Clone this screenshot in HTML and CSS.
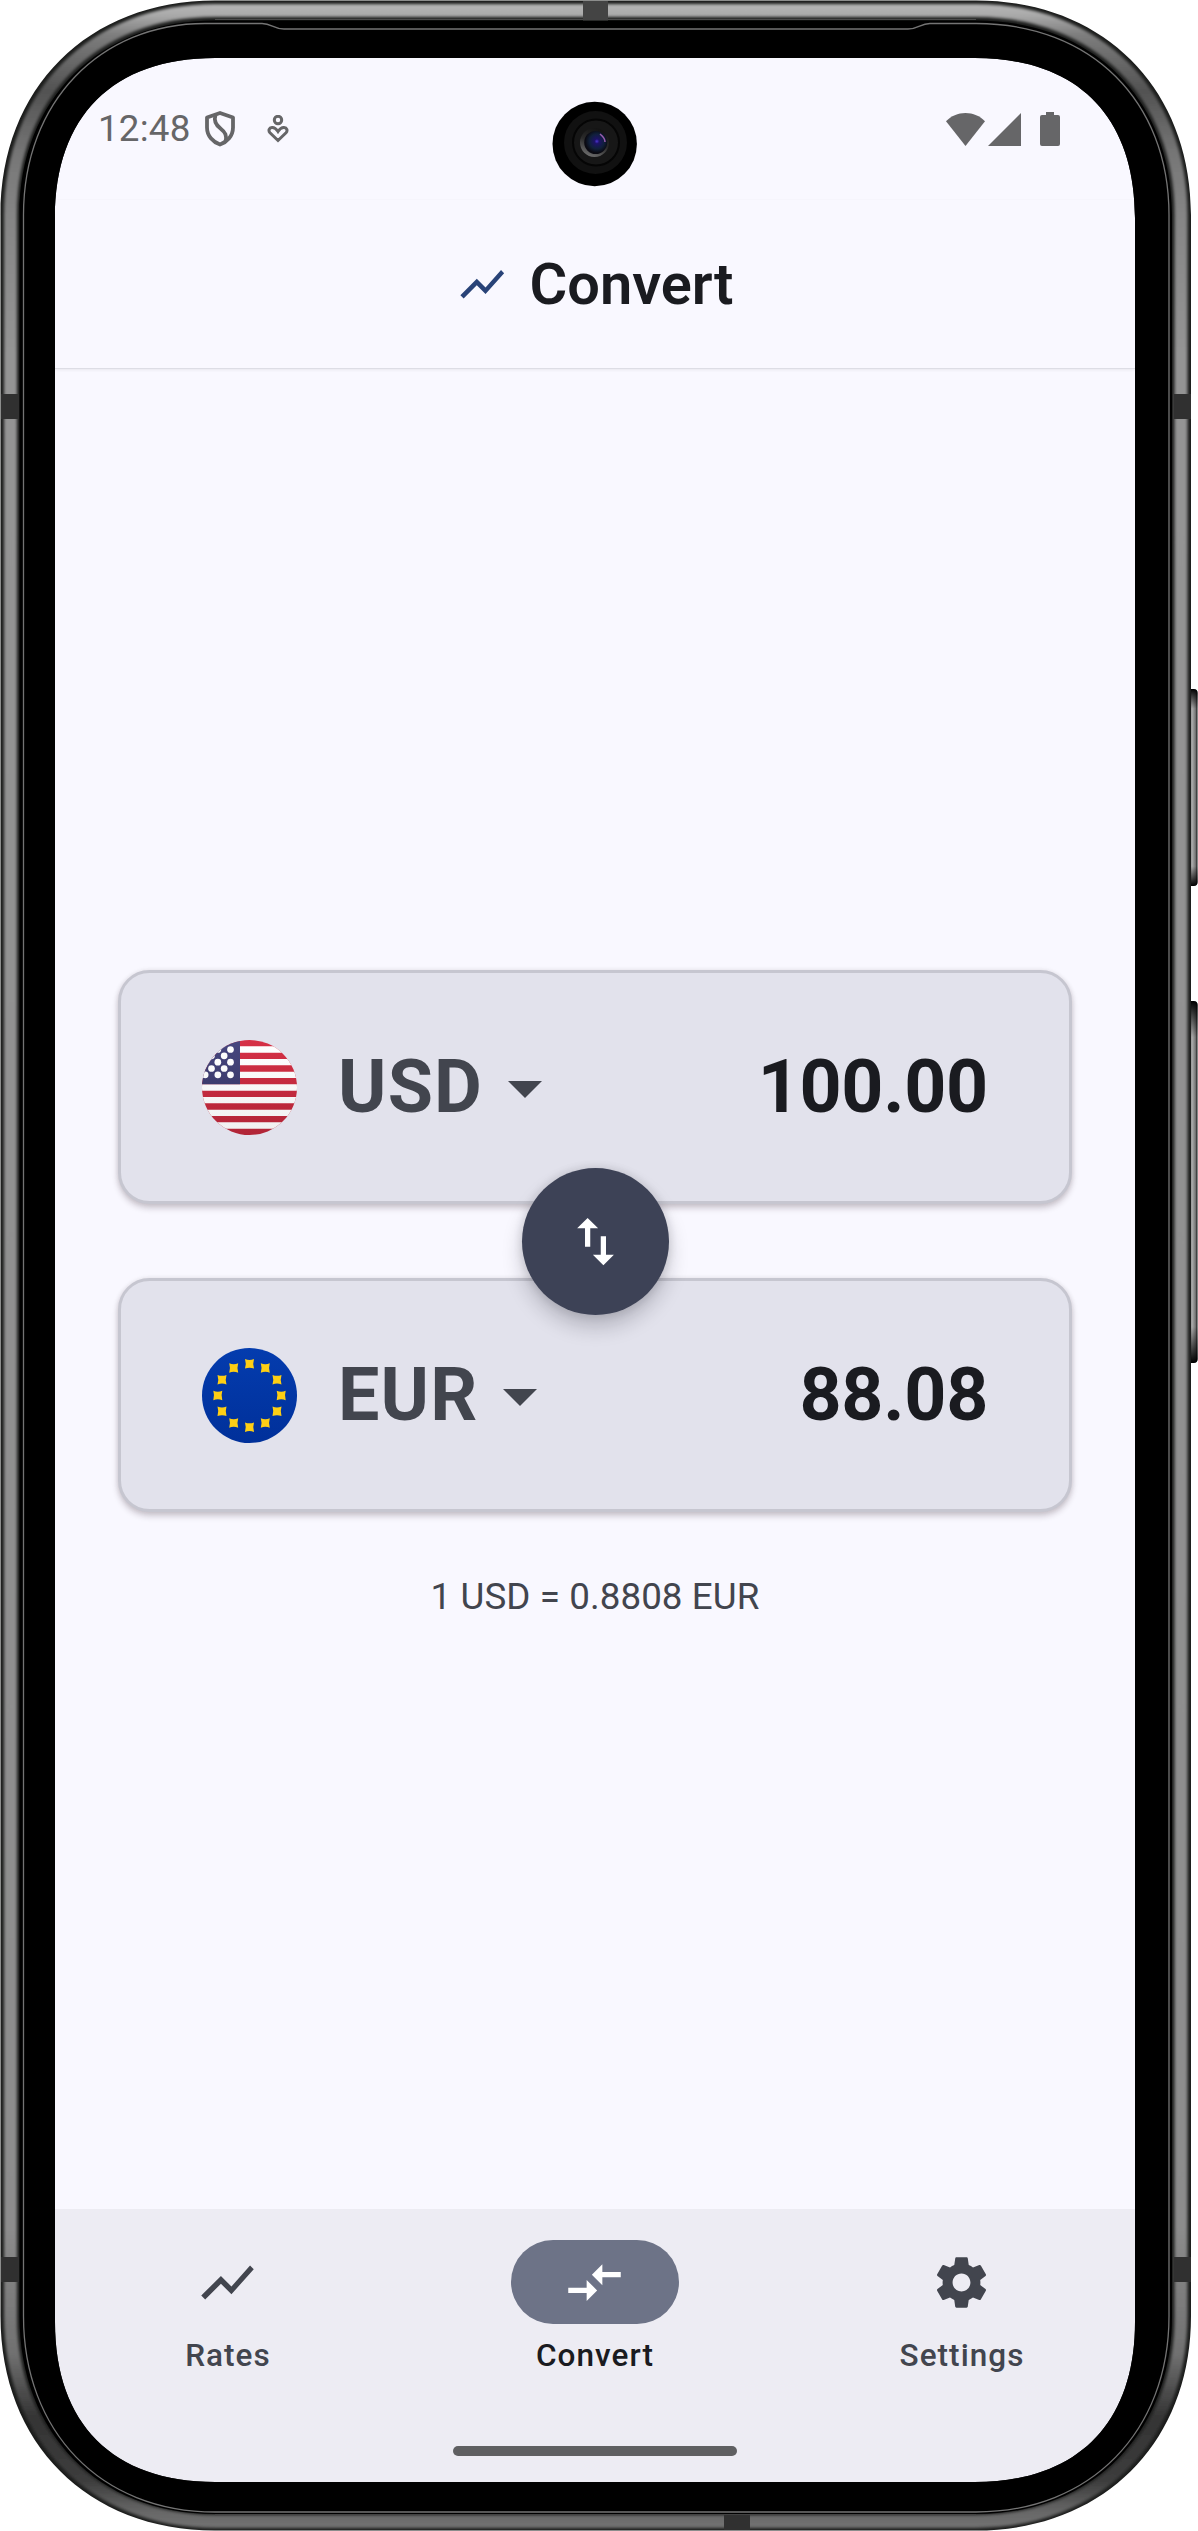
FILE: index.html
```html
<!DOCTYPE html>
<html lang="en">
<head>
<meta charset="utf-8">
<title>Convert</title>
<link rel="stylesheet" href="styles.css">
</head>
<body>
<div class="phone">
  <div class="screen">
    <div class="status">
      <span class="clock">12:48</span>
      <svg class="shield" viewBox="0 0 30 36" fill="none" stroke="#666668" stroke-width="3.800" stroke-linejoin="round"><path d="M15 2 2 6.500V16.500C2 25 8 31 15 33.500 22 31 28 25 28 16.500V6.500Z"/><path d="M10.500 4C8.500 10 11 14 15.500 17.500 20.500 21.500 22 24.500 20.500 30.500"/></svg>
      <svg class="care" viewBox="0 0 22 28" fill="none" stroke="#666668" stroke-width="3"><circle cx="11" cy="5" r="3.700"/><path d="M11 25.500 3 17.800C1 15.500 2.200 12.800 5 12.500 8 12.300 9.500 14.200 11 16.500 12.500 14.200 14 12.300 17 12.500 19.800 12.800 21 15.500 19 17.800Z"/></svg>
      <svg class="wifi" viewBox="0 0 39 33"><path fill="#666668" d="M0 8.300C5 3 12 0 19.500 0S34 3 39 8.300L19.500 33Z"/></svg>
      <svg class="signal" viewBox="0 0 33 33"><path fill="#666668" d="M33 0V33H0Z"/></svg>
      <svg class="battery" viewBox="0 0 20 34"><path fill="#666668" d="M6 0h8v3h4a2 2 0 0 1 2 2v27a2 2 0 0 1-2 2H2a2 2 0 0 1-2-2V5a2 2 0 0 1 2-2h4z"/></svg>
    </div>
    <header class="header">
      <svg class="header-icon" viewBox="0 0 24 24"><path fill="#294378" d="M3.500 18.490l6-6.010 4 4L22 6.920l-1.410-1.410-7.090 7.970-4-4L2 16.990z"/></svg>
      <h1 class="title">Convert</h1>
    </header>
    <main class="main">
      <section class="card">
        <svg class="flag" viewBox="0 0 15 15">
          <defs>
            <clipPath id="round"><circle cx="7.500" cy="7.500" r="7.500"/></clipPath>
            <linearGradient id="red" x2="0" y2="15" gradientUnits="userSpaceOnUse"><stop stop-color="#d63045"/><stop offset="1" stop-color="#b12537"/></linearGradient>
            <linearGradient id="white" x2="0" y2="15" gradientUnits="userSpaceOnUse"><stop stop-color="#fff"/><stop offset="1" stop-color="#f0f0f0"/></linearGradient>
            <linearGradient id="navy" x2="0" y2="1"><stop stop-color="#474780"/><stop offset="1" stop-color="#3d3c6d"/></linearGradient>
          </defs>
          <g clip-path="url(#round)">
            <path fill="url(#red)" d="M0 0h15v15H0z"/>
            <path fill="url(#white)" d="M0 1h15v1H0zM0 3h15v1H0zM0 5h15v1H0zM0 7h15v1H0zM0 9h15v1H0zM0 11h15v1H0zM0 13h15v1H0z"/>
            <path fill="url(#navy)" d="M0 0h6v7H0z"/>
            <g fill="url(#white)"><circle cx="2.500" cy="1.500" r=".53"/><circle cx="4.500" cy="1.500" r=".53"/><circle cx="1.500" cy="2.500" r=".53"/><circle cx="3.500" cy="2.500" r=".53"/><circle cx="2.500" cy="3.500" r=".53"/><circle cx="4.500" cy="3.500" r=".53"/><circle cx="1.500" cy="4.500" r=".53"/><circle cx="3.500" cy="4.500" r=".53"/><circle cx=".5" cy="5.500" r=".53"/><circle cx="2.500" cy="5.500" r=".53"/><circle cx="4.500" cy="5.500" r=".53"/></g>
          </g>
        </svg>
        <span class="code">USD</span>
        <svg class="caret" viewBox="0 0 34 17"><path fill="#42454e" d="M0 0h34L17 17z"/></svg>
        <span class="amount">100.00</span>
      </section>
      <section class="card">
        <svg class="flag" viewBox="0 0 95 95">
          <defs>
            <linearGradient id="blue" x2="0" y2="1"><stop stop-color="#043cae"/><stop offset="1" stop-color="#00309a"/></linearGradient>
            <path id="star" fill="#fecf14" d="M-4.500-4.700Q0-3 4.500-4.700 3 0 4.500 4.700 0 3-4.500 4.700-3 0-4.500-4.700Z"/>
          </defs>
          <circle cx="47.500" cy="47.500" r="47.500" fill="url(#blue)"/>
          <use href="#star" x="47.500" y="15.800"/><use href="#star" x="63.300" y="20"/><use href="#star" x="75" y="31.700"/><use href="#star" x="79.200" y="47.500"/><use href="#star" x="75" y="63.300"/><use href="#star" x="63.300" y="75"/><use href="#star" x="47.500" y="79.200"/><use href="#star" x="31.700" y="75"/><use href="#star" x="20" y="63.300"/><use href="#star" x="15.800" y="47.500"/><use href="#star" x="20" y="31.700"/><use href="#star" x="31.700" y="20"/>
        </svg>
        <span class="code">EUR</span>
        <svg class="caret" viewBox="0 0 34 17"><path fill="#42454e" d="M0 0h34L17 17z"/></svg>
        <span class="amount">88.08</span>
      </section>
      <button class="swap" aria-label="Swap currencies"><svg class="icon" viewBox="0 0 24 24"><path fill="#fff" d="M16 17.010V10h-2v7.010h-3L15 21l4-3.990h-3zM9 3L5 6.990h3V14h2V6.990h3L9 3z"/></svg></button>
      <p class="rate">1 USD = 0.8808 EUR</p>
    </main>
    <nav class="nav">
      <div class="tabs">
        <div class="tab">
          <span class="pill"><svg class="icon" viewBox="0 0 24 24"><path fill="#42454e" d="M3.500 18.490l6-6.010 4 4L22 6.920l-1.410-1.410-7.090 7.970-4-4L2 16.990z"/></svg></span>
          <span class="label">Rates</span>
        </div>
        <div class="tab tab-active">
          <span class="pill"><svg class="icon" viewBox="0 0 24 24"><path fill="#fff" d="M9.010 14H2v2h7.010v3L13 15l-3.990-4v3zm5.980-1v-3H22V8h-7.010V5L11 9l3.990 4z"/></svg></span>
          <span class="label">Convert</span>
        </div>
        <div class="tab">
          <span class="pill"><svg class="icon" viewBox="0 0 24 24"><path fill="#42454e" d="M19.140 12.940c.04-.3.06-.61.06-.94 0-.32-.02-.64-.07-.94l2.030-1.580c.18-.14.23-.41.12-.61l-1.920-3.320c-.12-.22-.37-.29-.59-.22l-2.390.96c-.5-.38-1.030-.7-1.620-.94l-.36-2.540c-.04-.24-.24-.41-.48-.41h-3.840c-.24 0-.43.17-.47.41l-.36 2.540c-.59.24-1.130.57-1.620.94l-2.390-.96c-.22-.08-.47 0-.59.22L2.740 8.870c-.12.21-.08.47.12.61l2.030 1.580c-.05.3-.09.63-.09.94s.02.64.07.94l-2.030 1.580c-.18.14-.23.41-.12.61l1.920 3.320c.12.22.37.29.59.22l2.390-.96c.5.38 1.030.7 1.620.94l.36 2.540c.05.24.24.41.48.41h3.840c.24 0 .44-.17.47-.41l.36-2.540c.59-.24 1.130-.56 1.620-.94l2.390.96c.22.08.47 0 .59-.22l1.920-3.320c.12-.22.07-.47-.12-.61l-2.010-1.580zM12 15.400c-1.870 0-3.400-1.530-3.400-3.400s1.530-3.400 3.400-3.400 3.400 1.530 3.400 3.400-1.530 3.400-3.400 3.400z"/></svg></span>
          <span class="label">Settings</span>
        </div>
      </div>
      <div class="home-bar"></div>
    </nav>
  </div>
  <svg class="frame" viewBox="0 0 1198 2531">
    <defs>
      <linearGradient id="metal" x2="0" y2="2531" gradientUnits="userSpaceOnUse">
        <stop stop-color="#b8b8b8"/><stop offset=".0055" stop-color="#acacac"/><stop offset=".014" stop-color="#7c7c7c"/><stop offset=".036" stop-color="#525252"/><stop offset=".06" stop-color="#757575"/><stop offset=".085" stop-color="#858585"/><stop offset=".14" stop-color="#949494"/><stop offset=".88" stop-color="#8c8c8c"/><stop offset=".93" stop-color="#707070"/><stop offset=".955" stop-color="#343434"/><stop offset=".98" stop-color="#3c3c3c"/><stop offset=".993" stop-color="#686868"/><stop offset="1" stop-color="#747474"/>
      </linearGradient>
      <linearGradient id="key" x2="1" y2="0"><stop stop-color="#555"/><stop offset=".5" stop-color="#aaa"/><stop offset=".8" stop-color="#777"/><stop offset="1" stop-color="#111"/></linearGradient>
      <linearGradient id="key-ends" x2="0" y2="1"><stop stop-color="#000"/><stop offset=".1" stop-color="#000" stop-opacity="0"/><stop offset=".9" stop-color="#000" stop-opacity="0"/><stop offset="1" stop-color="#000"/></linearGradient>
      <filter id="soft" filterUnits="userSpaceOnUse" x="0" y="0" width="1198" height="2531"><feGaussianBlur stdDeviation="1.500"/></filter>
      <radialGradient id="lens" cx=".55" cy=".45"><stop stop-color="#4b35d0"/><stop offset=".2" stop-color="#1d1268"/><stop offset=".65" stop-color="#10203a"/><stop offset="1" stop-color="#0a0a12"/></radialGradient>
      <linearGradient id="rim" x1=".7" y1="0" x2=".3" y2="1"><stop stop-color="#111"/><stop offset=".5" stop-color="#2a2a2a"/><stop offset="1" stop-color="#707070"/></linearGradient>
    </defs>
    <rect x="1187" y="689" width="10.500" height="197" rx="4" fill="url(#key)"/>
    <rect x="1187" y="689" width="10.500" height="197" rx="4" fill="url(#key-ends)"/>
    <rect x="1187" y="1001" width="10.500" height="362" rx="4" fill="url(#key)"/>
    <rect x="1187" y="1001" width="10.500" height="362" rx="4" fill="url(#key-ends)"/>
    <path fill="#1b1c1b" fill-rule="evenodd" d="M.5 215C.5 88 88 .5 215 .5H976C1103 .5 1191 88 1191 215V2316C1191 2443 1103 2530.500 976 2530.500H215C88 2530.500.5 2443.500.5 2316ZM55 218C55 116 113 58 215 58H975C1077 58 1135 116 1135 218V2322C1135 2424 1077 2482 975 2482H215C113 2482 55 2424 55 2322Z"/>
    <path fill="none" stroke="url(#metal)" stroke-width="13" filter="url(#soft)" d="M10.500 215C10.500 94 94 10.500 215 10.500H976C1097 10.500 1181 94 1181 215V2316C1181 2437 1097 2521.500 976 2521.500H215C94 2521.500 10.500 2437 10.500 2316Z"/>
    <path fill="#000" fill-rule="evenodd" d="M19.500 215C19.500 99 99 20.500 215 20.500H976C1093 20.500 1172 99 1172 215V2316C1172 2433 1093 2514 976 2514H215C98 2514 19.500 2433 19.500 2316ZM55 218C55 116 113 58 215 58H975C1077 58 1135 116 1135 218V2322C1135 2424 1077 2482 975 2482H215C113 2482 55 2424 55 2322Z"/>
    <path fill="none" stroke="#4b4b4b" stroke-width="1" d="M215 19.500H976M215 2515H976"/>
    <path fill="none" stroke="#747474" stroke-width="1.300" d="M23.500 215C23.500 101 101 23.500 205 23.500H262C272 23.500 273 29 284 29H908C919 29 920 23.500 930 23.500H976C1091 23.500 1169 101 1169 215V2316C1169 2431 1091 2512 976 2512H215C100 2512 23.500 2431 23.500 2316Z"/>
    <path fill="#303030" d="M1 394H19V419H1ZM1174 394H1191V419H1174ZM1 2257H19V2282H1ZM1174 2257H1191V2282H1174ZM724 2515H750V2530H724Z"/>
    <path fill="#444" d="M583 1H608V20.500H583Z"/>
    <circle cx="594.700" cy="144" r="42.200"/>
    <circle cx="595.500" cy="142.500" r="31.500" fill="#111"/>
    <circle cx="596" cy="142.500" r="23" fill="#171717" stroke="#050505" stroke-width="2"/>
    <circle cx="594.500" cy="142.500" r="14.500" fill="url(#rim)"/>
    <circle cx="595.700" cy="142.500" r="11.500" fill="url(#lens)"/>
    <path fill="none" stroke="#9a5cae" stroke-width="1.500" d="M600 134Q605 138 605 142"/>
  </svg>
</div>
</body>
</html>
```
FILE: styles.css
```css
* { box-sizing: border-box; }
body { margin: 0; background: #fff; font-family: Roboto, "Liberation Sans", sans-serif; }
svg { display: block; flex: none; }
.phone { position: relative; width: 1198px; height: 2531px; padding: 58px 63px 49px 55px; overflow: hidden; }
.frame { position: absolute; inset: 0; width: 1198px; height: 2531px; }
.screen { display: flex; flex-direction: column; width: 1080px; height: 2424px; background: #f9f8ff; border-radius: 130px; overflow: hidden; }

.status { display: flex; align-items: center; height: 142px; padding: 0 75px 0 43px; color: #666668; }
.clock { width: 107px; font-size: 36.75px; line-height: 44px; letter-spacing: .2px; }
.shield { width: 30px; height: 36px; }
.care { width: 22px; height: 28px; margin-left: 32px; }
.wifi { width: 39px; height: 33px; margin-left: auto; }
.signal { width: 33px; height: 33px; margin-left: 3px; }
.battery { width: 20px; height: 34px; margin-left: 19px; }

.header { display: flex; align-items: center; justify-content: center; gap: 21.5px; height: 169px; padding-right: 1px; border-bottom: 1px solid #dddde5; box-shadow: 0 1px 3px rgba(0, 0, 0, .07); }
.header-icon { width: 52.5px; height: 52.5px; }
.title { margin: 0; font-size: 57.75px; line-height: 74px; font-weight: 600; color: #1a1b20; }

.main { position: relative; display: flex; flex: 1; flex-direction: column; gap: 74px; padding: 601px 63px 0; }
.card { display: flex; align-items: center; height: 234px; padding: 0 81px; background: #e2e2ec; border: 3px solid #c6c6d0; border-radius: 31.5px; box-shadow: 0 4px 6px rgba(40, 20, 30, .22), 0 0 5px rgba(40, 20, 30, .08); }
.flag { width: 95px; height: 95px; }
.code { margin-left: 41px; font-size: 73.5px; line-height: 90px; font-weight: 700; letter-spacing: 1.2px; color: #42454e; }
.caret { width: 34px; height: 17px; margin: 5px 0 0 25px; }
.amount { margin-left: auto; font-size: 73.5px; line-height: 90px; font-weight: 700; letter-spacing: -.3px; color: #1a1b20; }
.swap { position: absolute; top: 799px; left: 467px; display: flex; align-items: center; justify-content: center; width: 147px; height: 147px; padding: 0; background: #3d4256; border: 0; border-radius: 50%; box-shadow: 0 12px 20px rgba(20, 20, 30, .22), 0 0 10px rgba(20, 20, 30, .14); }
.icon { width: 63px; height: 63px; }
.rate { margin: -12px 0 0; font-size: 36.75px; line-height: 46px; letter-spacing: .08px; text-align: center; color: #42454e; }

.nav { display: flex; flex-direction: column; align-items: center; height: 273px; padding: 31px 0 26px; background: #edecf3; }
.tabs { display: flex; gap: 21px; width: 100%; }
.tab { display: flex; flex: 1; flex-direction: column; align-items: center; gap: 10.5px; color: #42454e; }
.tab-active { color: #1a1b20; }
.pill { display: flex; align-items: center; justify-content: center; width: 168px; height: 84px; padding-right: 2px; border-radius: 42px; }
.tab-active .pill { background: #6d7387; }
.label { font-size: 31.5px; line-height: 42px; font-weight: 500; letter-spacing: 1.05px; }
.home-bar { width: 284px; height: 10px; margin-top: auto; background: #5f5f61; border-radius: 5px; }
```
